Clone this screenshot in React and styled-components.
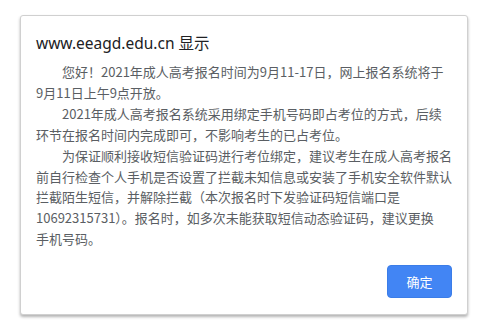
import React from 'react';
import styled, { createGlobalStyle } from 'styled-components';

const GlobalStyle = createGlobalStyle`
  body {
    margin: 0;
    background: #ffffff;
    font-family: "Noto Sans", "Noto Sans CJK SC", sans-serif;
  }
`

const Page = styled.div`
  width: 488px;
  height: 334px;
  padding: 15px 0 0 20px;
  box-sizing: border-box;
`

const Dialog = styled.div`
  width: 448px;
  height: 300px;
  box-sizing: border-box;
  border: 1px solid #d0d0d0;
  border-radius: 3px;
  box-shadow: 0 2px 3px rgba(0, 0, 0, 0.3);
  background: #fff;
  padding: 17px 15px 16px 15px;
  display: flex;
  flex-direction: column;
`

const Title = styled.div`
  font-size: 15.5px;
  line-height: 20px;
  color: #202124;
  font-family: "Noto Sans", "Noto Sans CJK SC", sans-serif;
`

const Message = styled.div`
  margin-top: 9px;
  font-size: 13px;
  line-height: 20.9px;
  color: #5a5e63;
  font-family: "Noto Sans CJK SC", sans-serif;
  white-space: nowrap;
`

const Para = styled.p`
  margin: 0;
  text-indent: 2em;
`

const Footer = styled.div`
  margin-top: auto;
  display: flex;
  justify-content: flex-end;
`

const Button = styled.button`
  width: 65px;
  height: 33px;
  border: 1px solid #3b7de8;
  border-radius: 4px;
  background: #4285f4;
  color: #fff;
  font-size: 13px;
  font-family: "Noto Sans CJK SC", sans-serif;
  padding: 0;
  cursor: pointer;
`

const App = () => {
  return (
    <Page>
      <GlobalStyle />
      <Dialog>
        <Title>www.eeagd.edu.cn 显示</Title>
        <Message>
          <Para>您好！2021年成人高考报名时间为9月11-17日，网上报名系统将于<br />9月11日上午9点开放。</Para>
          <Para>2021年成人高考报名系统采用绑定手机号码即占考位的方式，后续<br />环节在报名时间内完成即可，不影响考生的已占考位。</Para>
          <Para>为保证顺利接收短信验证码进行考位绑定，建议考生在成人高考报名<br />前自行检查个人手机是否设置了拦截未知信息或安装了手机安全软件默认<br />拦截陌生短信，并解除拦截（本次报名时下发验证码短信端口是<br />10692315731）。报名时，如多次未能获取短信动态验证码，建议更换<br />手机号码。</Para>
        </Message>
        <Footer>
          <Button>确定</Button>
        </Footer>
      </Dialog>
    </Page>
  )
}

export default App
